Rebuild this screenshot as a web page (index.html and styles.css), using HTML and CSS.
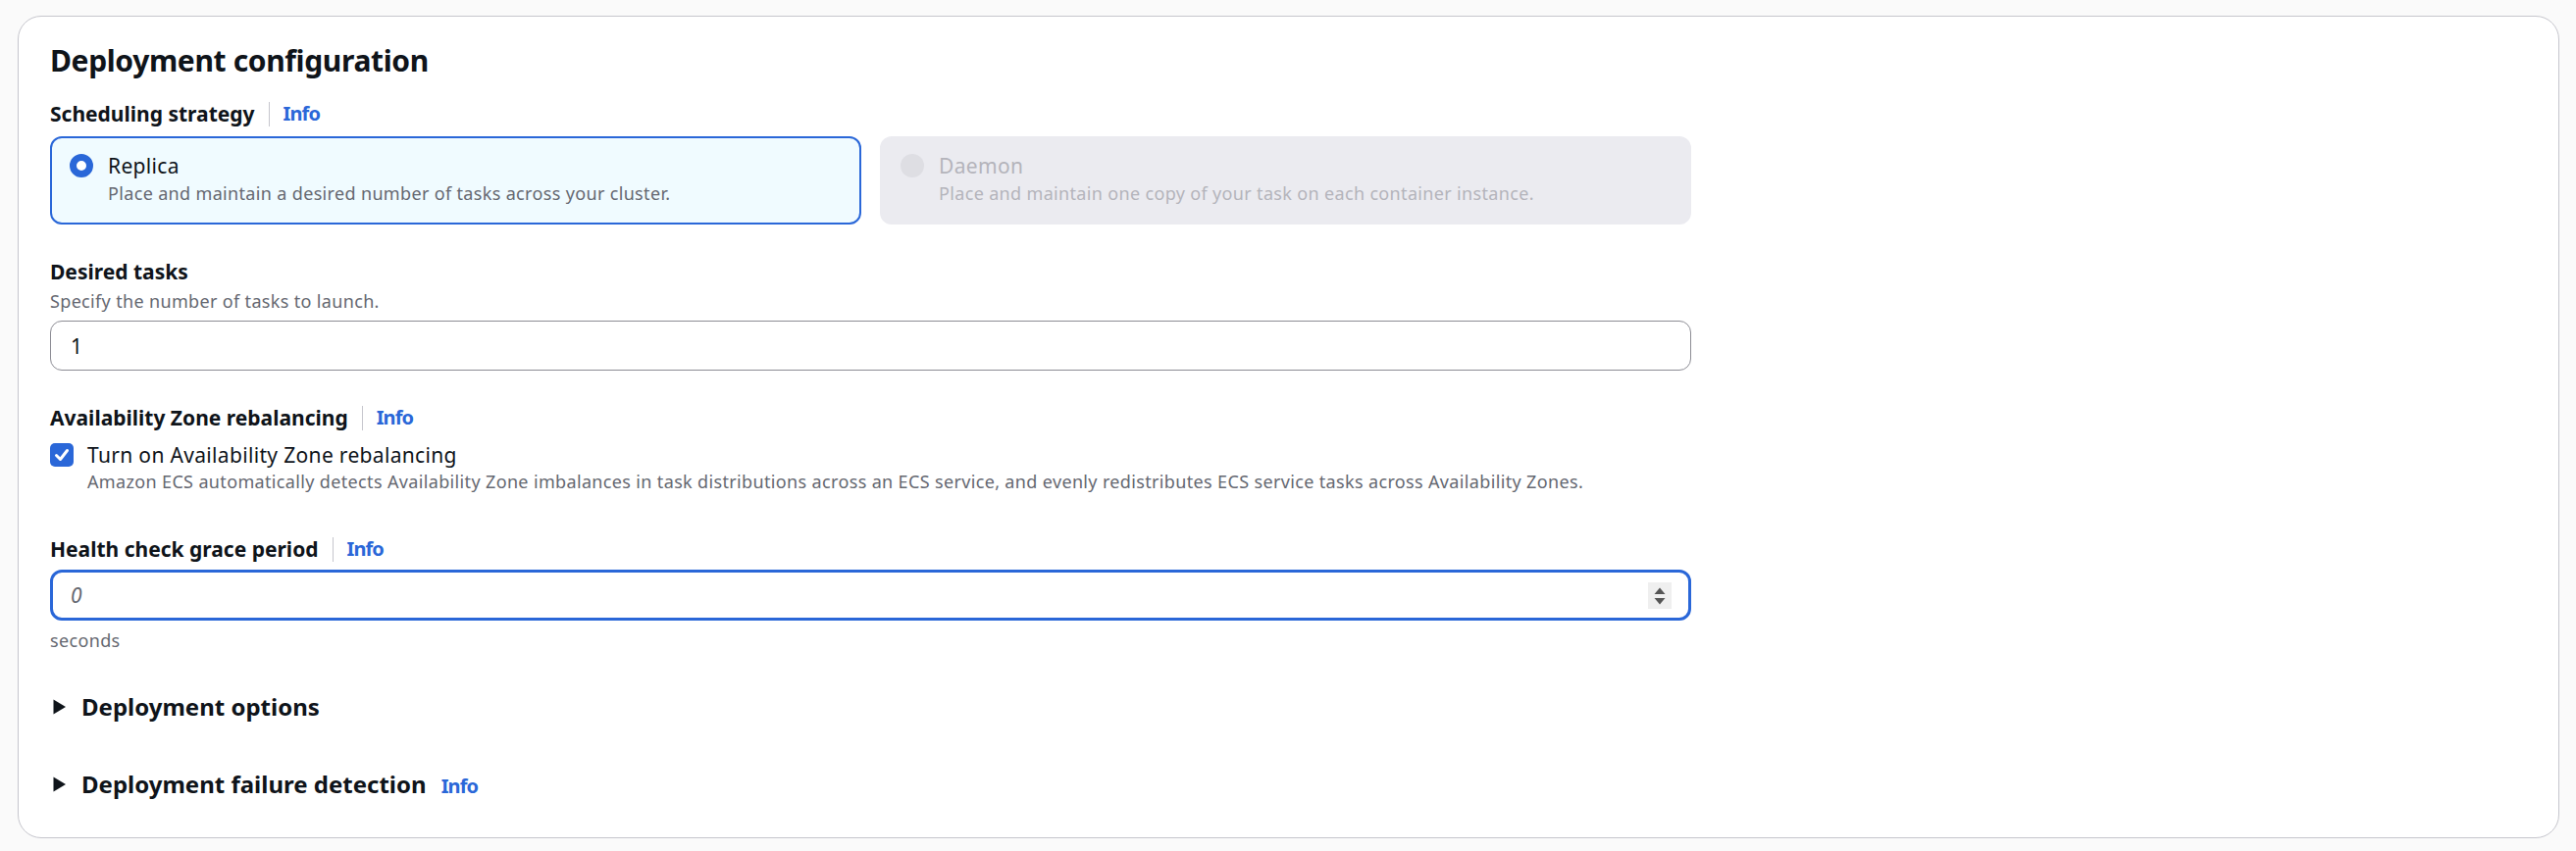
FILE: index.html
```html
<!DOCTYPE html>
<html lang="en">
<head>
<meta charset="utf-8">
<title>Deployment configuration</title>
<link rel="stylesheet" href="styles.css">
</head>
<body>
<section class="card">
  <h2 class="title">Deployment configuration</h2>

  <div class="form">
    <div class="label-row label-first">
      <span class="label">Scheduling strategy</span><span class="sep"></span><a class="info">Info</a>
    </div>
    <div class="tiles">
      <div class="tile tile-selected">
        <span class="radio radio-on"></span>
        <div class="tile-text">
          <div class="tile-label">Replica</div>
          <div class="tile-desc">Place and maintain a desired number of tasks across your cluster.</div>
        </div>
      </div>
      <div class="tile tile-disabled">
        <span class="radio radio-disabled"></span>
        <div class="tile-text">
          <div class="tile-label">Daemon</div>
          <div class="tile-desc">Place and maintain one copy of your task on each container instance.</div>
        </div>
      </div>
    </div>

    <div class="label-row label-gap">
      <span class="label">Desired tasks</span>
    </div>
    <div class="field-desc">Specify the number of tasks to launch.</div>
    <div class="input input-tasks"><span class="input-value">1</span></div>

    <div class="label-row label-gap">
      <span class="label">Availability Zone rebalancing</span><span class="sep"></span><a class="info">Info</a>
    </div>
    <div class="check-row">
      <span class="checkbox">
        <svg width="24" height="24" viewBox="0 0 24 24"><path d="M6.5 12.5 L10.5 16.5 L17.5 7.5" fill="none" stroke="#ffffff" stroke-width="3" stroke-linecap="round" stroke-linejoin="round"/></svg>
      </span>
      <span class="check-label">Turn on Availability Zone rebalancing</span>
    </div>
    <div class="check-desc">Amazon ECS automatically detects Availability Zone imbalances in task distributions across an ECS service, and evenly redistributes ECS service tasks across Availability Zones.</div>

    <div class="label-row label-gap-lg">
      <span class="label">Health check grace period</span><span class="sep"></span><a class="info">Info</a>
    </div>
    <div class="input input-focused">
      <span class="placeholder">0</span>
      <span class="spinner">
        <svg width="24" height="27" viewBox="0 0 24 27"><path d="M6.5 12 L12 5.5 L17.5 12 Z" fill="#555555"/><path d="M6.5 16 L12 22.5 L17.5 16 Z" fill="#555555"/></svg>
      </span>
    </div>
    <div class="constraint">seconds</div>

    <div class="expand expand-first">
      <svg class="caret" width="14" height="16" viewBox="0 0 14 16"><path d="M0.5 0.5 L13 8 L0.5 15.5 Z" fill="#0f141a"/></svg>
      <span class="expand-title">Deployment options</span>
    </div>
    <div class="expand expand-second">
      <svg class="caret" width="14" height="16" viewBox="0 0 14 16"><path d="M0.5 0.5 L13 8 L0.5 15.5 Z" fill="#0f141a"/></svg>
      <span class="expand-title">Deployment failure detection</span>
      <a class="info info-head">Info</a>
    </div>
  </div>
</section>
</body>
</html>
```

FILE: styles.css
```css
html, body {
  margin: 0;
  padding: 0;
  background: #fafafa;
}

body {
  font-family: "Noto Sans", "Open Sans", sans-serif;
  color: #0f141a;
  padding: 16px 17px 13px 18px;
}

.card {
  background: #ffffff;
  border: 1px solid #c6c6cd;
  border-radius: 24px;
  padding: 27px 32px 39px 32px;
}

.title {
  margin: 0;
  font-size: 30px;
  line-height: 36px;
  font-weight: 700;
  letter-spacing: -0.35px;
  color: #0f141a;
}

.form {
  max-width: 1673px;
}

.label-row {
  display: flex;
  align-items: center;
  height: 30px;
}

.label-first { margin-top: 21px; }
.label-gap { margin-top: 33px; }
.label-gap-lg { margin-top: 42px; }

.label {
  font-size: 21px;
  line-height: 30px;
  font-weight: 700;
  color: #0f141a;
}

.sep {
  width: 1px;
  height: 25px;
  background: #c6c6cd;
  margin: 0 14px 0 14px;
}

.info {
  font-size: 20px;
  line-height: 30px;
  font-weight: 700;
  letter-spacing: -0.9px;
  color: #2a67d8;
  text-decoration: none;
}

.tiles {
  margin-top: 8px;
  display: grid;
  grid-template-columns: 1fr 1fr;
  gap: 19px;
}

.tile {
  display: flex;
  align-items: flex-start;
  border-radius: 12px;
  border: 2px solid transparent;
  padding: 13px 18px 18px 18px;
}

.tile-selected {
  background: #f0fbff;
  border-color: #2a67d8;
}

.tile-disabled {
  background: #ebebf0;
  border-color: #ebebf0;
  padding-left: 19px;
}

.radio {
  flex: none;
  width: 24px;
  height: 24px;
  border-radius: 50%;
  box-sizing: border-box;
  margin-top: 3px;
  margin-right: 15px;
}

.radio-on {
  border: 7px solid #2a67d8;
  background: #ffffff;
}

.radio-disabled {
  background: #dedee3;
}

.tile-label {
  font-size: 21px;
  line-height: 30px;
  letter-spacing: 0.33px;
}

.tile-desc {
  margin-top: 1px;
  font-size: 18px;
  line-height: 24px;
  letter-spacing: 0.34px;
  color: #656871;
}

.tile-disabled .tile-label,
.tile-disabled .tile-desc {
  color: #b4b4bb;
}

.field-desc {
  margin-top: 3px;
  font-size: 18px;
  line-height: 24px;
  letter-spacing: 0.34px;
  color: #656871;
}

.input {
  box-sizing: border-box;
  display: flex;
  align-items: center;
  justify-content: space-between;
  border: 1px solid #8c8c94;
  border-radius: 12px;
  background: #ffffff;
}

.input-tasks {
  margin-top: 8px;
  height: 51px;
  padding-left: 20px;
}

.input-value {
  font-size: 21px;
  line-height: 30px;
  color: #0f141a;
}

.check-row {
  display: flex;
  align-items: center;
  margin-top: 8px;
  height: 30px;
}

.checkbox {
  flex: none;
  width: 24px;
  height: 24px;
  border-radius: 5px;
  background: #2a67d8;
  margin-right: 14px;
}

.checkbox svg {
  display: block;
}

.check-label {
  font-size: 21px;
  line-height: 30px;
  letter-spacing: 0.33px;
}

.check-desc {
  padding-left: 38px;
  font-size: 18px;
  line-height: 24px;
  letter-spacing: 0.35px;
  color: #656871;
}

.input-focused {
  margin-top: 6px;
  height: 52px;
  border: 3px solid #2a67d8;
  padding-left: 18px;
  padding-right: 17px;
}

.placeholder {
  font-size: 21px;
  line-height: 30px;
  font-style: italic;
  color: #656871;
}

.spinner {
  width: 24px;
  height: 27px;
  background: #efefef;
}

.spinner svg {
  display: block;
}

.constraint {
  margin-top: 8px;
  font-size: 18px;
  line-height: 24px;
  letter-spacing: 0.34px;
  color: #656871;
}

.expand {
  display: flex;
  align-items: baseline;
  height: 30px;
}

.expand-first { margin-top: 41px; }
.expand-second { margin-top: 49px; }

.caret {
  flex: none;
  align-self: center;
  margin-left: 3px;
  margin-right: 15px;
}

.expand-title {
  font-size: 24px;
  line-height: 30px;
  font-weight: 700;
}

.info-head {
  margin-left: 15px;
}
```
